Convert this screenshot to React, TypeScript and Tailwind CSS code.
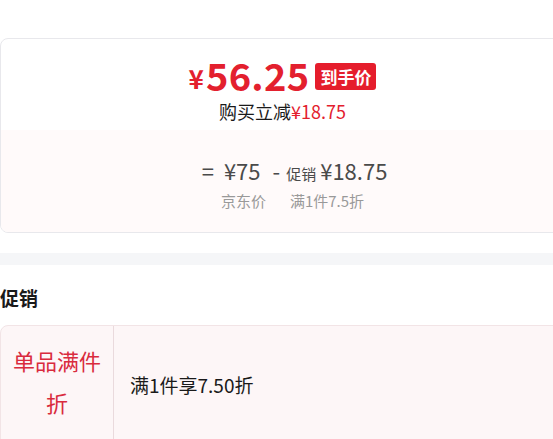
import React from 'react';

const font = { fontFamily: '"Noto Sans CJK SC", "Noto Sans", sans-serif' };

const App: React.FC = () => {
  return (
    <div className="w-[553px] h-[439px] overflow-hidden bg-white" style={font}>
      <div className="pt-[38px]">
        {/* Price card */}
        <div className="-mr-3 border border-[#e8e8ec] rounded-lg overflow-hidden">
          <div className="flex flex-col items-center pt-[16px] pb-[7px]">
            <div className="flex items-center h-[40px]">
              <span className="text-[#e3202e] font-bold text-[26px] leading-none mt-[6px] mr-[2px]">¥</span>
              <span className="text-[#e3202e] font-bold text-[38px] leading-[34px] tracking-[0.3px]">56.25</span>
              <span className="ml-[6px] bg-[#e51d2c] text-white font-bold text-[17px] leading-none px-[5px] py-[5px] rounded-[3px] mt-[2px]">
                到手价
              </span>
            </div>
            <div className="text-[18px] leading-[24px] text-[#1a1a1a] mt-[4px]">
              购买立减<span className="text-[#e3202e]">¥18.75</span>
            </div>
          </div>
          <div className="bg-[#fffafa] h-[102px] flex flex-col items-center pt-[26px] pl-[24px]">
            <div className="flex items-baseline text-[#4a4a4a] text-[22px] leading-[28px]">
              <span>=</span>
              <span className="ml-[10px]">¥75</span>
              <span className="ml-[12px]">-</span>
              <span className="ml-[6px] text-[15px]">促销</span>
              <span className="ml-[4px]">¥18.75</span>
            </div>
            <div className="flex text-[15px] leading-[20px] text-[#999999] mt-[3px] -ml-[4px]">
              <span>京东价</span>
              <span className="ml-[24px]">满1件7.5折</span>
            </div>
          </div>
        </div>

        {/* Divider band */}
        <div className="h-[12px] bg-[#f5f6f8] mt-[20px]" />

        {/* Promotions */}
        <div className="pt-[20px]">
          <div className="text-[19px] font-bold leading-[26px] text-[#1a1a1a]">促销</div>
          <div className="-mr-3 mt-[14px] border border-[#f2e4e6] rounded-lg bg-[#fdf6f7] flex h-[140px]">
            <div className="w-[113px] shrink-0 border-r border-[#eadadd] flex flex-col items-center pt-[13px] text-[#d92b3e] text-[22px] leading-[42px] text-center">
              <span>单品满件</span>
              <span>折</span>
            </div>
            <div className="flex items-start pt-[46px] pl-[16px] text-[19px] leading-[26px] text-[#1a1a1a]">
              满1件享7.50折
            </div>
          </div>
        </div>
      </div>
    </div>
  );
};

export default App;
